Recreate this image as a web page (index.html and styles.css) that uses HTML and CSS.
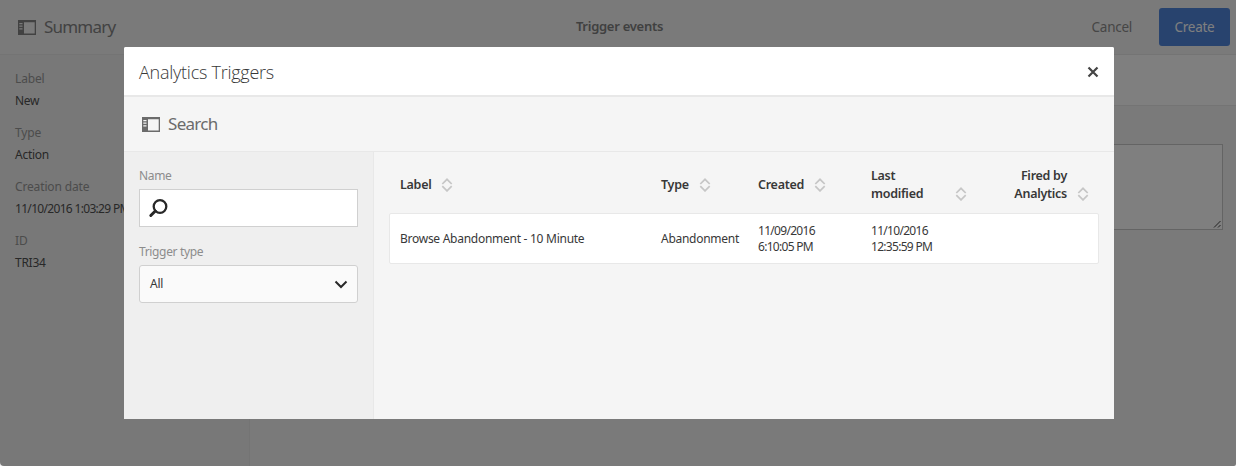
FILE: index.html
```
<!DOCTYPE html>
<html lang="en">
<head>
<meta charset="utf-8">
<title>Trigger events</title>
<link rel="stylesheet" href="styles.css">
</head>
<body>
<svg class="defs" aria-hidden="true">
  <symbol id="rail" viewBox="0 0 18 15"><path fill="currentColor" fill-rule="evenodd" d="M0 0h18v15H0zM6 2.200v11.400h10.700V2.200zM1.300 3h3.200v1.200H1.300zM1.300 5.600h3.200v1.200H1.300zM1.300 8.200h3.200v1.200H1.300z"/></symbol>
  <symbol id="sort" viewBox="0 0 12 14"><path fill="none" stroke="currentColor" stroke-width="1.7" d="M1.300 6L6 1.300 10.700 6M1.300 8.200L6 12.900l4.700-4.700"/></symbol>
</svg>
<div class="page">
  <header class="topbar">
    <div class="summary"><svg class="rail-icon"><use href="#rail"/></svg><span>Summary</span></div>
    <h1 class="page-title"><span>Trigger events</span></h1>
    <div class="actions"><span class="cancel">Cancel</span><button class="create">Create</button></div>
  </header>
  <div class="content">
    <aside class="details">
      <dl>
        <dt>Label</dt><dd>New</dd>
        <dt>Type</dt><dd>Action</dd>
        <dt>Creation date</dt><dd class="date">11/10/2016 1:03:29 PM</dd>
        <dt>ID</dt><dd>TRI34</dd>
      </dl>
    </aside>
    <main class="workspace">
      <div class="band"></div>
      <div class="field"><svg class="grip" viewBox="0 0 8 8"><path d="M1 7.500L7.500 1M5 7.500L7.500 5"/></svg></div>
    </main>
  </div>
</div>
<div class="underlay">
  <section class="dialog">
    <header class="dialog-head"><h2>Analytics Triggers</h2><svg class="close" viewBox="0 0 12 12"><path d="M1.500 1.500l9 9M10.500 1.500l-9 9"/></svg></header>
    <div class="toolbar"><svg class="rail-icon"><use href="#rail"/></svg><span>Search</span></div>
    <div class="dialog-body">
      <form class="filters">
        <label>Name</label>
        <div class="search-box"><svg class="lens" viewBox="0 0 20 20"><circle cx="12" cy="8.500" r="6.300"/><path class="handle" d="M7.300 13L2.800 17.500"/></svg></div>
        <label>Trigger type</label>
        <div class="select"><span>All</span><svg class="chevron" viewBox="0 0 14 9"><path d="M1.500 1.500L7 7l5.500-5.500"/></svg></div>
      </form>
      <div class="results">
        <div class="row head">
          <div>Label<svg class="sort"><use href="#sort"/></svg></div>
          <div>Type<svg class="sort"><use href="#sort"/></svg></div>
          <div>Created<svg class="sort"><use href="#sort"/></svg></div>
          <div class="modified"><span>Last<br>modified</span><svg class="sort"><use href="#sort"/></svg></div>
          <div class="fired"><span>Fired by<br>Analytics</span><svg class="sort"><use href="#sort"/></svg></div>
        </div>
        <div class="row item">
          <div>Browse Abandonment - 10 Minute</div>
          <div>Abandonment</div>
          <div class="stamp">11/09/2016<br>6:10:05 PM</div>
          <div class="stamp">11/10/2016<br>12:35:59 PM</div>
          <div></div>
        </div>
      </div>
    </div>
  </section>
</div>
</body>
</html>
```
FILE: styles.css
```
* { box-sizing: border-box; }
body { margin: 0; width: 1236px; height: 466px; overflow: hidden; background: #fff; color: #383838; font: 12px/16px "Noto Sans", "Open Sans", sans-serif; letter-spacing: -0.27px; }
h1, h2, dl, dd { margin: 0; font-weight: 400; }
svg { display: block; flex: none; }
.defs { position: absolute; width: 0; height: 0; }
.page { height: 466px; display: flex; flex-direction: column; background: #f4f4f4; }
.topbar { height: 55px; display: grid; grid-template-columns: 1fr auto 1fr; align-items: center; padding: 0 6px 0 18px; border-bottom: 1px solid #e8e8e8; }
.summary, .toolbar { display: flex; align-items: center; gap: 8px; color: #6b6b6b; font-size: 17px; letter-spacing: -0.8px; }
.summary { color: #858585; }
.rail-icon { width: 18px; height: 15px; }
.page-title { padding: 0 9px 2px 0; font-size: 13px; font-weight: 600; color: #808080; }
.actions { display: flex; align-items: center; justify-content: flex-end; gap: 27px; font-size: 13.5px; color: #8c8c8c; }
.create { width: 71px; height: 38px; padding: 0; border: 0; border-radius: 3px; background: #5086dc; color: #fff; font: inherit; letter-spacing: inherit; }
.content { display: flex; flex: 1; }
.details { width: 250px; padding: 16px 15px; background: #f0f0f0; border-right: 1px solid #e9e9e9; }
dt { line-height: 16px; }
.details dt { color: #989898; letter-spacing: -0.15px; }
dd { color: #505050; line-height: 16px; margin: 6px 0 16px; white-space: nowrap; }
.date { letter-spacing: -0.68px; }
.workspace { flex: 1; }
.band { height: 51px; background: #fff; border-bottom: 1px solid #e8e8e8; }
.field { height: 86px; margin: 38px 13px 0 15px; border: 1px solid #c8c8c8; background: #fff; display: flex; justify-content: flex-end; align-items: flex-end; padding: 1px; }
.grip { width: 8px; height: 8px; fill: none; stroke: #444; }
.underlay { position: absolute; inset: 0 auto auto 0; width: 1236px; height: 466px; padding: 47px 122px 47px 124px; background: rgba(0,0,0,.5); }
.page, .underlay { border-radius: 0 0 2px 4px; }
.dialog { height: 372px; display: flex; flex-direction: column; overflow: hidden; border-radius: 2px 2px 0 0; background: #f5f5f5; }
.dialog-head { height: 50px; display: flex; align-items: center; justify-content: space-between; padding: 2px 15px 0; background: #fff; border-bottom: 2px solid #e8e8e8; }
.dialog-head h2 { font: 300 18px/24px "Open Sans", "Noto Sans", sans-serif; letter-spacing: -0.25px; color: #383838; }
.close { width: 12px; height: 12px; fill: none; stroke: #444; stroke-width: 2.2; }
.toolbar { height: 55px; padding: 0 18px; border-bottom: 1px solid #e8e8e8; letter-spacing: -0.7px; }
.dialog-body { flex: 1; display: flex; }
.filters { width: 250px; padding: 16px 15px 0; background: #efefef; border-right: 1px solid #e8e8e8; }
.filters label { display: block; color: #8c8c8c; margin-bottom: 5px; letter-spacing: -0.35px; }
.search-box, .select { height: 38px; display: flex; align-items: center; border: 1px solid #d0d0d0; background: #fff; margin-bottom: 17px; }
.search-box { padding-left: 8px; }
.lens { width: 20px; height: 20px; fill: none; stroke: #282828; stroke-width: 2.300; stroke-linecap: round; }
.handle { stroke-width: 3; }
.select { justify-content: space-between; padding: 0 9px 0 10px; border-radius: 3px; background: #fafafa; }
.chevron { width: 14px; height: 9px; fill: none; stroke: #282828; stroke-width: 2; }
.results { flex: 1; padding: 10px 15px; }
.row { display: grid; grid-template-columns: 261px 97px 113px 110px 1fr; align-items: center; padding: 0 10px; border: 1px solid transparent; white-space: nowrap; }
.head { height: 51px; padding-bottom: 6px; font-weight: 600; font-size: 12.5px; line-height: 18px; }
.head > div { display: flex; align-items: center; gap: 10px; }
.head .modified, .head .fired { align-items: flex-end; justify-content: space-between; }
.head .modified { width: 96px; }
.head .fired { justify-content: flex-end; text-align: right; }
.head .fired .sort, .head .modified .sort { margin-bottom: 2px; }
.head .fired .sort { margin-right: -1px; }
.sort { width: 12px; height: 14px; color: #c6c6c6; }
.item { height: 51px; background: #fff; border-color: #e8e8e8; border-radius: 2px; }
.stamp { letter-spacing: -0.7px; }
```
